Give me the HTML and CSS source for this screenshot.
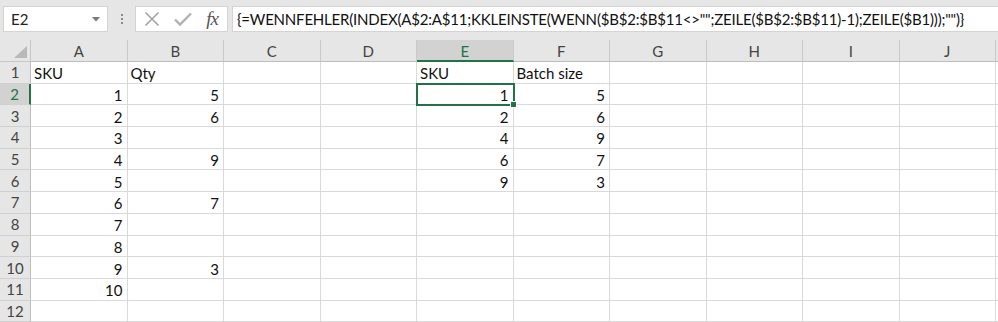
FILE: index.html
```html
<!DOCTYPE html>
<html>

<head>
    <title>Mappe1 - Excel</title>
    <link rel="stylesheet" href="styles.css">
</head>

<body>
    <div class="formula-bar">
        <div class="name-box">
            <span>E2</span>
            <svg class="drop" width="8" height="5" viewBox="0 0 8 5"><path d="M0 0h8L4 4.5z" fill="#7a7a7a"/></svg>
        </div>
        <div class="grip">
            <i></i><i></i><i></i>
        </div>
        <div class="fx-box">
            <svg width="16" height="16" viewBox="0 0 16 16"><path d="M1.5 1.5l13 13M14.5 1.5l-13 13" stroke="#a3a3a3" stroke-width="1.6" fill="none"/></svg>
            <svg width="18" height="16" viewBox="0 0 18 16"><path d="M1 8.5l5 5L17 2.5" stroke="#b0b0b0" stroke-width="2.4" fill="none"/></svg>
            <span class="fx">fx</span>
        </div>
        <div class="formula">{=WENNFEHLER(INDEX(A$2:A$11;KKLEINSTE(WENN($B$2:$B$11&lt;&gt;"";ZEILE($B$2:$B$11)-1);ZEILE($B1)));"")}</div>
    </div>

    <div class="sheet" id="sheet"></div>

    <script>
        const sheet = document.getElementById("sheet")
        const cols = ["A", "B", "C", "D", "E", "F", "G", "H", "I", "J"]
        const data = {
            1: { A: "SKU", B: "Qty", E: "SKU", F: "Batch size" },
            2: { A: 1, B: 5, E: 1, F: 5 },
            3: { A: 2, B: 6, E: 2, F: 6 },
            4: { A: 3, E: 4, F: 9 },
            5: { A: 4, B: 9, E: 6, F: 7 },
            6: { A: 5, E: 9, F: 3 },
            7: { A: 6, B: 7 },
            8: { A: 7 },
            9: { A: 8 },
            10: { A: 9, B: 3 },
            11: { A: 10 },
            12: {}
        }

        function cell(cls, text) {
            const el = document.createElement("div")
            el.className = cls
            if (text !== undefined) el.textContent = text
            sheet.appendChild(el)
            return el
        }

        cell("corner")
        cols.forEach(c => cell(c === "E" ? "col-head selected" : "col-head", c))
        cell("col-head rest")

        for (let r = 1; r <= 12; r++) {
            cell(r === 2 ? "row-head selected" : "row-head", r)
            cols.forEach(c => {
                const v = data[r][c]
                let cls = "cell"
                if (typeof v === "number") cls += " num"
                if (r === 2 && c === "E") cls += " active"
                cell(cls, v)
            })
            cell("cell rest")
        }
    </script>
</body>

</html>
```

FILE: styles.css
```css
body {
    margin: 0;
    background: #e6e6e6;
    font-family: Lato, "Open Sans", sans-serif;
    overflow: hidden;
}

.formula-bar {
    display: flex;
    align-items: center;
    height: 26px;
    padding: 6px 0 8px 3px;
}

.name-box {
    display: flex;
    align-items: center;
    justify-content: space-between;
    width: 105px;
    height: 100%;
    box-sizing: border-box;
    padding: 0 7px 0 7px;
    background: #fff;
    border: 1px solid #d4d4d4;
    font-size: 15px;
    color: #222;
}

.grip {
    display: flex;
    flex-direction: column;
    gap: 2px;
    width: 27px;
    align-items: center;
}

.grip i {
    width: 2px;
    height: 2px;
    background: #8a8a8a;
}

.fx-box {
    display: flex;
    align-items: center;
    justify-content: space-between;
    width: 93px;
    height: 100%;
    box-sizing: border-box;
    padding: 0 7px 0 8px;
    background: #fff;
    border: 1px solid #d4d4d4;
}

.fx {
    font-family: "Liberation Serif", serif;
    font-style: italic;
    font-size: 19px;
    color: #555;
    letter-spacing: -1px;
    padding-right: 2px;
}

.formula {
    flex: 1;
    height: 100%;
    box-sizing: border-box;
    margin-left: 4px;
    padding: 0 0 0 4px;
    background: #fff;
    border: 1px solid #d4d4d4;
    border-right: none;
    font-size: 15px;
    letter-spacing: -0.2px;
    line-height: 24px;
    color: #111;
    white-space: nowrap;
    overflow: hidden;
}

.sheet {
    display: grid;
    grid-template-columns: 31px repeat(10, 96.5px) 1fr;
    grid-template-rows: 22px;
    grid-auto-rows: 21.7px;
    background: #fff;
    font-size: 15px;
    color: #111;
}

.corner,
.col-head,
.row-head {
    background: #e6e6e6;
    color: #444;
    display: flex;
    align-items: center;
    justify-content: center;
    box-sizing: border-box;
}

.corner {
    position: relative;
    border-right: 1px solid #c6c6c6;
    border-bottom: 1px solid #c6c6c6;
}

.corner::after {
    content: "";
    position: absolute;
    right: 3px;
    bottom: 3px;
    width: 13px;
    height: 12px;
    background: #b9b9b9;
    clip-path: polygon(100% 0, 100% 100%, 0 100%);
}

.col-head {
    border-right: 1px solid #cacaca;
    border-bottom: 1px solid #bdbdbd;
    padding-top: 1px;
}

.col-head.rest {
    border-right: none;
}

.row-head {
    border-right: 1px solid #bdbdbd;
    border-bottom: 1px solid #d0d0d0;
}

.selected {
    background: #d2d2d2;
    color: #217346;
}

.col-head.selected {
    border-bottom: 2px solid #217346;
}

.row-head.selected {
    border-right: 2px solid #217346;
}

.cell {
    display: flex;
    align-items: center;
    padding: 2px 4px 0 3px;
    box-sizing: border-box;
    border-right: 1px solid #d9d9d9;
    border-bottom: 1px solid #d9d9d9;
    white-space: nowrap;
    overflow: hidden;
}

.cell.num {
    justify-content: flex-end;
}

.cell.rest {
    border-right: none;
}

.cell.active {
    position: relative;
    overflow: visible;
    z-index: 1;
    outline: 2px solid #217346;
    outline-offset: -1px;
}

.cell.active::after {
    content: "";
    position: absolute;
    right: -4px;
    bottom: -4px;
    width: 5px;
    height: 5px;
    background: #217346;
    border: 1px solid #fff;
}
```
